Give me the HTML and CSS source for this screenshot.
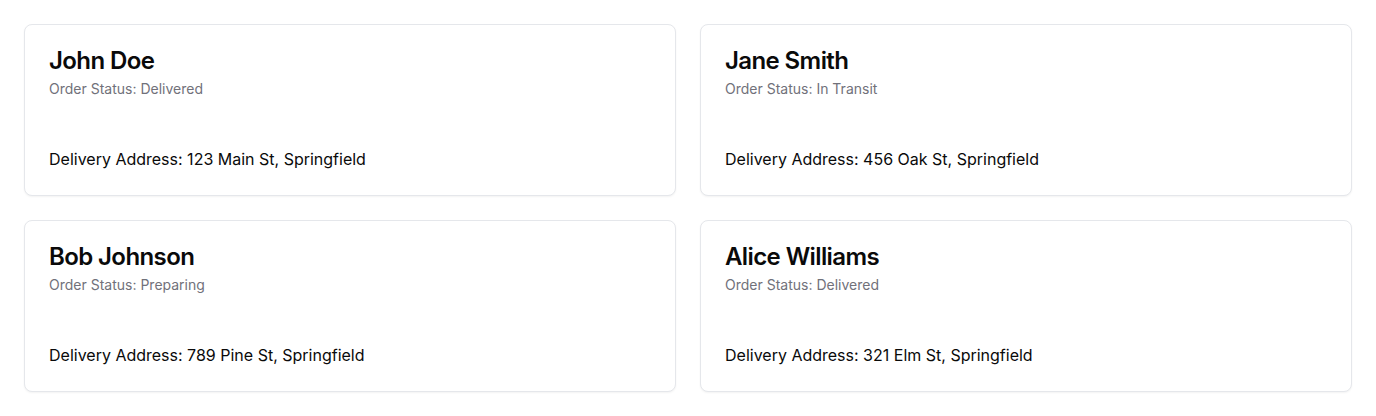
FILE: index.html
```html
<!DOCTYPE html>
<html lang="en">
<head>
<meta charset="utf-8">
<title>Orders</title>
<link rel="stylesheet" href="styles.css">
</head>
<body>
<main class="grid">
  <div class="card">
    <div class="card-header">
      <h3 class="card-title">John Doe</h3>
      <p class="card-desc">Order Status: Delivered</p>
    </div>
    <div class="card-content"><p>Delivery Address: 123 Main St, Springfield</p></div>
  </div>
  <div class="card">
    <div class="card-header">
      <h3 class="card-title">Jane Smith</h3>
      <p class="card-desc">Order Status: In Transit</p>
    </div>
    <div class="card-content"><p>Delivery Address: 456 Oak St, Springfield</p></div>
  </div>
  <div class="card">
    <div class="card-header">
      <h3 class="card-title">Bob Johnson</h3>
      <p class="card-desc">Order Status: Preparing</p>
    </div>
    <div class="card-content"><p>Delivery Address: 789 Pine St, Springfield</p></div>
  </div>
  <div class="card">
    <div class="card-header">
      <h3 class="card-title">Alice Williams</h3>
      <p class="card-desc">Order Status: Delivered</p>
    </div>
    <div class="card-content"><p>Delivery Address: 321 Elm St, Springfield</p></div>
  </div>
</main>
</body>
</html>
```
FILE: styles.css
```css
* { box-sizing: border-box; }
html, body { margin: 0; padding: 0; background: #ffffff; }
body {
  font-family: Inter, "Liberation Sans", sans-serif;
  color: #0a0a0a;
}
.grid {
  display: grid;
  grid-template-columns: 1fr 1fr;
  gap: 24px;
  padding: 24px;
}
.card {
  border: 1px solid #e5e7eb;
  border-radius: 8px;
  background: #fff;
  box-shadow: 0 1px 2px 0 rgba(0,0,0,0.05);
}
.card-header {
  display: flex;
  flex-direction: column;
  gap: 6px;
  padding: 24px;
}
.card-title {
  margin: 0;
  font-size: 24px;
  line-height: 24px;
  font-weight: 600;
  letter-spacing: -0.6px;
}
.card-desc {
  margin: 0;
  font-size: 14px;
  line-height: 20px;
  color: #71717a;
}
.card-content {
  padding: 24px;
}
.card-content p {
  margin: 0;
  font-size: 16px;
  line-height: 24px;
}
```
